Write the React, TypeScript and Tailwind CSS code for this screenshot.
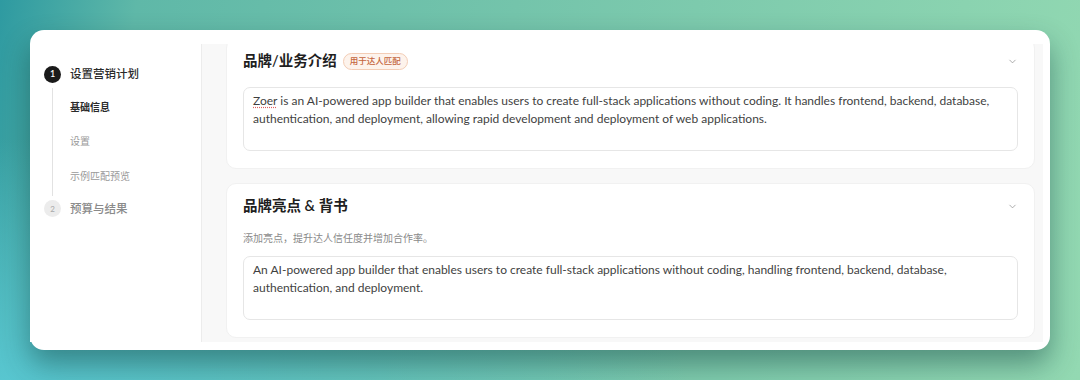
import { ChevronDown } from 'lucide-react';

const SUB_STEPS = [
  { label: '基础信息', active: true },
  { label: '设置', active: false },
  { label: '示例匹配预览', active: false },
];

function Sidebar() {
  return (
    <div className="w-[172px] shrink-0 bg-white border-r border-[#ececec] pl-[14px] pt-[16px]">
      {/* Step 1 */}
      <div className="flex items-center h-[28px]">
        <div className="w-[17px] h-[17px] rounded-full bg-[#1a1a1a] text-white text-[9px] font-semibold flex items-center justify-center">
          1
        </div>
        <span className="ml-[9px] text-[11.5px] font-medium text-[#2a2a2a]">设置营销计划</span>
      </div>
      <div className="ml-[8px] border-l border-[#e2e2e2] pl-[17px] pt-[2px] pb-[2px]">
        {SUB_STEPS.map((s) => (
          <div
            key={s.label}
            className={`h-[34.5px] flex items-center text-[10px] ${
              s.active ? 'font-bold text-[#2a2a2a]' : 'text-[#9a9a9a]'
            }`}
          >
            {s.label}
          </div>
        ))}
      </div>
      {/* Step 2 */}
      <div className="flex items-center h-[26px]">
        <div className="w-[17px] h-[17px] rounded-full bg-[#ececec] text-[#a8a8a8] text-[8px] flex items-center justify-center">
          2
        </div>
        <span className="ml-[9px] text-[11.5px] font-medium text-[#8a8a8a]">预算与结果</span>
      </div>
    </div>
  );
}

function SectionCard({
  title,
  badge,
  description,
  text,
}: {
  title: string;
  badge?: string;
  description?: string;
  text: React.ReactNode;
}) {
  return (
    <div className="bg-white rounded-[10px] border border-[#f1f1f1] px-[16px] pt-[11px] pb-[17px]">
      <div className="flex items-center justify-between h-[22px]">
        <div className="flex items-center gap-[6px]">
          <h3 className="text-[14.5px] font-semibold text-[#1f1f1f]">{title}</h3>
          {badge && (
            <span className="h-[17px] px-[6px] rounded-full border border-[#f3cdb6] bg-[#fdf3ec] text-[8.5px] font-medium text-[#c4653c] flex items-center">
              {badge}
            </span>
          )}
        </div>
        <ChevronDown className="w-[11px] h-[11px] text-[#888]" strokeWidth={1.5} />
      </div>
      {description && (
        <p className="mt-[13px] text-[10px] leading-[16px] text-[#8a8a8a]">{description}</p>
      )}
      <div
        className={`${description ? 'mt-[10px]' : 'mt-[15px]'} h-[64px] border border-[#e6e6e6] rounded-[7px] px-[9px] pt-[4px] text-[12px] leading-[18px] text-[#3f3f3f]`}
      >
        {text}
      </div>
    </div>
  );
}

export default function App() {
  return (
    <div
      className="w-[1080px] h-[380px] pt-[30px] px-[30px] overflow-hidden bg-[radial-gradient(ellipse_at_0%_100%,#58c6d0_0%,rgba(88,198,208,0)_45%),linear-gradient(100deg,#2e9aa1_0%,#5fb8a8_12%,#74c4ab_45%,#93d9b2_100%)]"
      style={{ fontFamily: 'Lato, "Noto Sans CJK SC", sans-serif' }}
    >
      <div className="h-[320px] bg-white rounded-[14px] shadow-[0_14px_28px_rgba(10,60,60,0.45)] pt-[14px] pb-[8px] pr-[7px] flex">
        <Sidebar />
        <div className="flex-1 bg-[#f8f8f8] overflow-hidden pl-[24px] pr-[8px]">
          <div className="-mt-[6px] flex flex-col gap-[14px]">
            <SectionCard
              title="品牌/业务介绍"
              badge="用于达人匹配"
              text={
                <>
                  <span className="underline decoration-dotted decoration-[#e06060] underline-offset-2">Zoer</span> is an
                  AI-powered app builder that enables users to create full-stack applications without coding. It
                  handles frontend, backend, database, authentication, and deployment, allowing rapid development and
                  deployment of web applications.
                </>
              }
            />
            <SectionCard
              title="品牌亮点 & 背书"
              description="添加亮点，提升达人信任度并增加合作率。"
              text="An AI-powered app builder that enables users to create full-stack applications without coding, handling frontend, backend, database, authentication, and deployment."
            />
          </div>
        </div>
      </div>
    </div>
  );
}
